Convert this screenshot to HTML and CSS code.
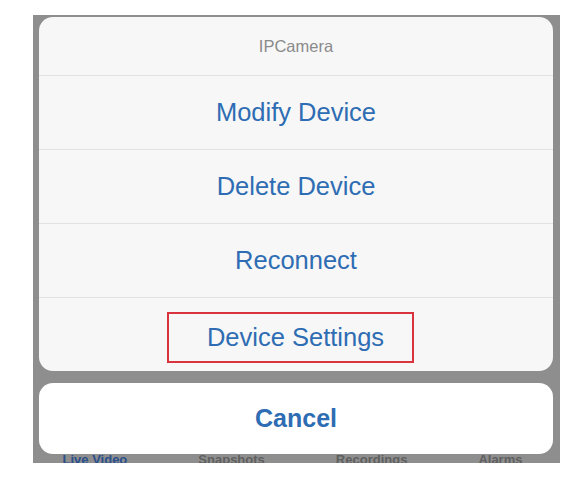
FILE: index.html
```html
<!DOCTYPE html>
<html>
<head>
<meta charset="utf-8">
<link rel="stylesheet" href="styles.css">
</head>
<body>
<div class="screen">
  <div class="tabbar">
    <span class="tab active">Live Video</span>
    <span class="tab">Snapshots</span>
    <span class="tab">Recordings</span>
    <span class="tab">Alarms</span>
  </div>
  <div class="sheet">
    <div class="group">
      <div class="title">IPCamera</div>
      <div class="action">Modify Device</div>
      <div class="action">Delete Device</div>
      <div class="action">Reconnect</div>
      <div class="action"><span class="highlight">Device Settings</span></div>
    </div>
    <div class="group cancel-group">
      <div class="action cancel">Cancel</div>
    </div>
  </div>
</div>
</body>
</html>
```
FILE: styles.css
```css
html, body {
  margin: 0;
  padding: 0;
  background: #ffffff;
}
body {
  font-family: "Liberation Sans", Arial, sans-serif;
}
.screen {
  position: relative;
  margin: 15px 0 0 33px;
  width: 527px;
  height: 448px;
  background: #8e8e8e;
  overflow: hidden;
}
.tabbar {
  position: absolute;
  left: -6px;
  right: 2px;
  bottom: -4px;
  display: flex;
  justify-content: space-around;
  font-size: 13px;
  font-weight: bold;
  color: #5f5f5f;
  z-index: 0;
}
.tab.active {
  color: #2a4f8c;
}
.sheet {
  position: relative;
  z-index: 1;
  display: flex;
  flex-direction: column;
  gap: 12px;
  padding: 2px 7px 0 6px;
}
.group {
  background: #f7f7f7;
  border-radius: 14px;
  overflow: hidden;
}
.title {
  height: 58px;
  line-height: 58px;
  text-align: center;
  font-size: 16.5px;
  color: #8a8a8a;
  border-bottom: 1px solid #e2e2e2;
}
.action {
  height: 73px;
  line-height: 73px;
  text-align: center;
  font-size: 25.5px;
  color: #2e6db3;
  border-bottom: 1px solid #e2e2e2;
}
.group .action:last-child {
  border-bottom: none;
}
.highlight {
  display: inline-block;
  line-height: 47px;
  padding: 0 28px 0 38px;
  margin: 14px 11px 0 0;
  border: 2px solid #d9343d;
  vertical-align: top;
}
.cancel-group {
  background: #ffffff;
}
.cancel {
  height: 71px;
  line-height: 71px;
  font-size: 25px;
  font-weight: bold;
}
```
